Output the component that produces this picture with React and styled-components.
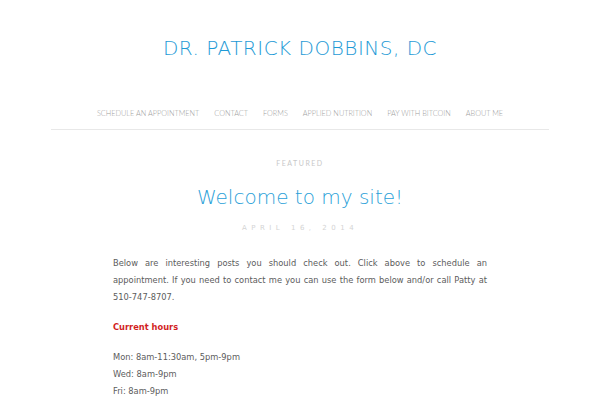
import styled, { createGlobalStyle } from "styled-components";

const GlobalStyle = createGlobalStyle`
	html, body {
		margin: 0;
		padding: 0;
		background: #fff;
	}
	body {
		font-family: "DejaVu Sans", "Liberation Sans", sans-serif;
	}
`;

const Page = styled.div`
	width: 600px;
	height: 400px;
	overflow: hidden;
`;

const Header = styled.header`
	padding-top: 36px;
	text-align: center;
`;

const SiteTitle = styled.h1`
	margin: 0;
	font-family: "DejaVu Sans", sans-serif;
	font-weight: 200;
	font-size: 20px;
	line-height: 24px;
	letter-spacing: 0.5px;
	color: #1e9ad6;
`;

const Nav = styled.nav`
	margin: 48px 51px 0;
	padding-bottom: 9px;
	border-bottom: 1px solid #e8e8e8;
	display: flex;
	justify-content: center;
	gap: 15px;
`;

const NavItem = styled.a`
	font-family: "Lato", "Open Sans", sans-serif;
	font-weight: 300;
	font-size: 7.3px;
	line-height: 12px;
	color: #a0a0a0;
	text-transform: uppercase;
	text-decoration: none;
`;

const Article = styled.article`
	padding: 28px 113px 0;
	text-align: center;
`;

const Category = styled.div`
	font-family: "Lato", "Open Sans", sans-serif;
	font-size: 7px;
	line-height: 10px;
	letter-spacing: 1.5px;
	color: #c8c8c8;
	text-transform: uppercase;
`;

const PostTitle = styled.h2`
	margin: 17px 0 0;
	font-family: "DejaVu Sans", sans-serif;
	font-weight: 200;
	font-size: 20px;
	line-height: 24px;
	color: #2a9fd8;
`;

const PostDate = styled.div`
	margin-top: 14px;
	font-family: "DejaVu Sans", sans-serif;
	font-size: 7px;
	line-height: 10px;
	letter-spacing: 4.5px;
	color: #d4d4d4;
	text-transform: uppercase;
`;

const Body = styled.div`
	margin-top: 22px;
	text-align: left;
	font-family: "DejaVu Sans", sans-serif;
	font-size: 8.3px;
	line-height: 17px;
	color: #5c5c5c;
`;

const Para = styled.p`
	margin: 0 0 13px;
	text-align: ${(props) => (props.justify ? "justify" : "left")};
	color: ${(props) => (props.accent ? "#d21f1f" : "#5c5c5c")};
	font-weight: ${(props) => (props.accent ? 700 : 400)};
`;

const menu = [
	"Schedule an appointment",
	"Contact",
	"Forms",
	"Applied Nutrition",
	"Pay with Bitcoin",
	"About Me",
];

const App = () => {
	return (
		<Page>
			<GlobalStyle />
			<Header>
				<SiteTitle>DR. PATRICK DOBBINS, DC</SiteTitle>
				<Nav>
					{menu.map((item) => (
						<NavItem key={item} href="#">
							{item}
						</NavItem>
					))}
				</Nav>
			</Header>
			<Article>
				<Category>Featured</Category>
				<PostTitle>Welcome to my site!</PostTitle>
				<PostDate>April 16, 2014</PostDate>
				<Body>
					<Para justify>
						Below are interesting posts you should check out. Click above to
						schedule an appointment. If you need to contact me you can use the
						form below and/or call Patty at 510-747-8707.
					</Para>
					<Para accent>Current hours</Para>
					<Para>
						Mon: 8am-11:30am, 5pm-9pm
						<br />
						Wed: 8am-9pm
						<br />
						Fri: 8am-9pm
					</Para>
				</Body>
			</Article>
		</Page>
	);
};

export default App;
